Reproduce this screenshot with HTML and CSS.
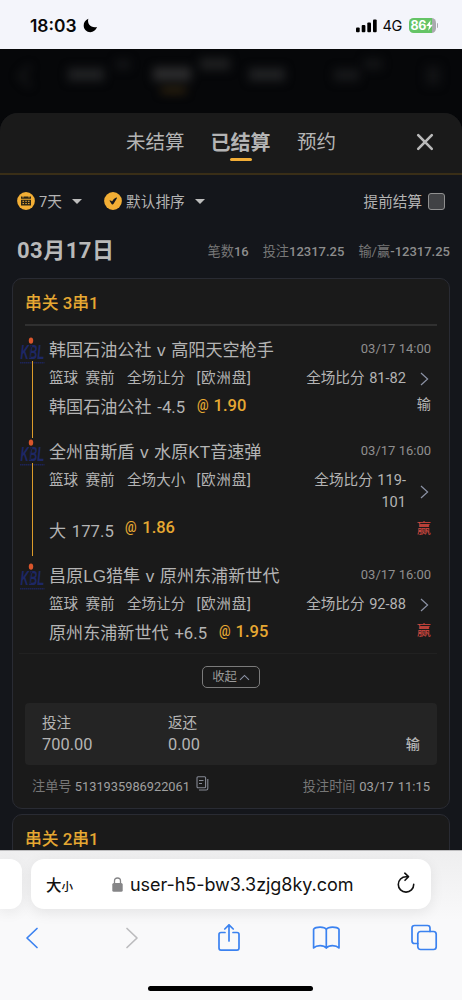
FILE: index.html
```html
<!DOCTYPE html>
<html lang="zh-CN">
<head>
<meta charset="utf-8">
<meta name="viewport" content="width=device-width, initial-scale=1">
<title>已结算</title>
<link rel="stylesheet" href="styles.css">
</head>
<body>
<header class="status">
  <span class="clock">18:03</span>
  <svg class="moon" width="15" height="15" viewBox="0 0 15 15"><path d="M5.3.8C3.9 5.9 8.2 10.6 14.1 9 12.7 12.4 10.2 14.2 7.4 14.2 3.6 14.2.7 11.3.7 7.5.7 4.5 2.3 2 5.3.8Z"/></svg>
  <svg class="signal" width="21" height="14" viewBox="0 0 21 14"><rect y="8.5" width="3.7" height="4.8" rx="1"/><rect x="5.7" y="6" width="3.7" height="7.3" rx="1"/><rect x="11.3" y="3.4" width="3.7" height="9.9" rx="1"/><rect x="17" y=".5" width="3.7" height="12.8" rx="1"/></svg>
  <span class="net">4G</span>
  <span class="battery"><b>86</b><svg width="7" height="11" viewBox="0 0 7 11"><path d="M4.6.2.2 6H3L2.2 10.8 6.8 4.8H4Z" fill="#fff"/></svg></span><i class="cap"></i>
</header>
<div class="backdrop">
  <svg width="462" height="64" viewBox="0 0 462 64" class="ghosts">
    <path d="M30 17 20 27 30 37" fill="none" stroke="#1d1e20" stroke-width="3"/>
    <g fill="#202123"><rect x="68" y="19" width="36" height="13"/><rect x="116" y="11" width="14" height="9" fill="#141517"/><rect x="249" y="19" width="36" height="13"/><rect x="334" y="20" width="25" height="12" fill="#17181a"/><rect x="364" y="10" width="18" height="10" fill="#141517"/><rect x="426" y="17" width="14" height="19" fill="#111214"/></g>
    <rect x="153" y="18" width="38" height="14" fill="#2b2b2c"/><rect x="200" y="9" width="30" height="12" fill="#1e1f20"/>
    <rect x="161" y="39" width="25" height="5" fill="#3b2b10"/>
  </svg>
</div>
<main class="sheet">
  <nav class="tabs">
    <span class="tab t1">未结算</span><span class="tab on">已结算</span><span class="tab t3">预约</span>
    <svg class="close" width="18" height="18" viewBox="0 0 18 18"><path d="M2.2 2.2 15.8 15.8M15.8 2.2 2.2 15.8" stroke="#b9b9b9" stroke-width="2.6" stroke-linecap="round"/></svg>
  </nav>
  <div class="filters">
    <svg width="18" height="18" viewBox="0 0 18 18"><circle cx="9" cy="9" r="8.9" fill="#f2ae35"/><path d="M4 4.6H14V6.8H4ZM4 7.7H14V13.4H4Z" fill="#292416"/><path d="M5.5 9.3H7M8.3 9.3H9.8M11 9.3H12.5M5.5 11.6H7M8.3 11.6H9.8M11 11.6H12.5M6 4V5.6M12 4V5.6" stroke="#f2ae35" stroke-width="1"/></svg>
    <span class="f1">7天</span><i class="caret"></i>
    <svg class="ic2" width="18" height="18" viewBox="0 0 18 18"><circle cx="9" cy="9" r="8.9" fill="#f2ae35"/><path d="M5.4 8.6Q7.2 8.2 8 9.4 9.6 6.2 12.2 5.4 13.4 5.2 12.8 6.6L9.6 11.8Q8.6 13 7.6 11.9Z" fill="#15171c"/></svg>
    <span class="f2">默认排序</span><i class="caret"></i>
    <span class="early">提前结算</span><i class="box"></i>
  </div>
  <div class="summary">
    <h1>03月17日</h1>
    <span>笔数<b>16</b></span><span>投注<b>12317.25</b></span><span>输/赢<b>-12317.25</b></span>
  </div>
  <section class="card">
    <h2>串关 <span>3</span>串<span>1</span></h2>
    <div class="legs">
      <article class="leg">
        <div class="rail">
          <svg class="kbl" width="25" height="28" viewBox="0 0 25 28"><text x="1" y="22.5" transform="scale(.55 1)">KBL</text><path d="M10 21C9.4 16 10 10 12.2 8.4" fill="none" stroke="#1a1b2c" stroke-width="1.2"/><ellipse cx="11" cy="3.6" rx="2.2" ry="3.2" fill="#d9552b"/><path d="M0 25.8H24.5" stroke="#1d2456" stroke-width="1.6" stroke-dasharray="1.6 .4"/></svg><i></i></div>
        <div class="info">
          <div class="match"><span>韩国石油公社 v 高阳天空枪手</span><time>03/17 14:00</time></div>
          <div class="market"><span class="m1">篮球</span><span class="m2">赛前</span><span class="m3">全场让分</span><span class="m4">[欧洲盘]</span><span class="score">全场比分 81-82</span><svg width="9" height="14" viewBox="0 0 9 14"><path d="M1 1 7.6 7 1 13"/></svg></div>
          <div class="pick"><span>韩国石油公社 <b>-4.5</b></span><em><i>@</i>1.90</em><strong>输</strong></div>
        </div>
      </article>
      <article class="leg">
        <div class="rail">
          <svg class="kbl" width="25" height="28" viewBox="0 0 25 28"><text x="1" y="22.5" transform="scale(.55 1)">KBL</text><path d="M10 21C9.4 16 10 10 12.2 8.4" fill="none" stroke="#1a1b2c" stroke-width="1.2"/><ellipse cx="11" cy="3.6" rx="2.2" ry="3.2" fill="#d9552b"/><path d="M0 25.8H24.5" stroke="#1d2456" stroke-width="1.6" stroke-dasharray="1.6 .4"/></svg><i></i></div>
        <div class="info">
          <div class="match"><span>全州宙斯盾 v 水原KT音速弹</span><time>03/17 16:00</time></div>
          <div class="market"><span class="m1">篮球</span><span class="m2">赛前</span><span class="m3">全场大小</span><span class="m4">[欧洲盘]</span><span class="score">全场比分 119-<br>101</span><svg width="9" height="14" viewBox="0 0 9 14"><path d="M1 1 7.6 7 1 13"/></svg></div>
          <div class="pick"><span>大 <b>177.5</b></span><em><i>@</i>1.86</em><strong class="win">赢</strong></div>
        </div>
      </article>
      <article class="leg">
        <div class="rail">
          <svg class="kbl" width="25" height="28" viewBox="0 0 25 28"><text x="1" y="22.5" transform="scale(.55 1)">KBL</text><path d="M10 21C9.4 16 10 10 12.2 8.4" fill="none" stroke="#1a1b2c" stroke-width="1.2"/><ellipse cx="11" cy="3.6" rx="2.2" ry="3.2" fill="#d9552b"/><path d="M0 25.8H24.5" stroke="#1d2456" stroke-width="1.6" stroke-dasharray="1.6 .4"/></svg></div>
        <div class="info">
          <div class="match"><span>昌原LG猎隼 v 原州东浦新世代</span><time>03/17 16:00</time></div>
          <div class="market"><span class="m1">篮球</span><span class="m2">赛前</span><span class="m3">全场让分</span><span class="m4">[欧洲盘]</span><span class="score">全场比分 92-88</span><svg width="9" height="14" viewBox="0 0 9 14"><path d="M1 1 7.6 7 1 13"/></svg></div>
          <div class="pick"><span>原州东浦新世代 <b>+6.5</b></span><em><i>@</i>1.95</em><strong class="win">赢</strong></div>
        </div>
      </article>
    </div>
    <div class="fold"><span>收起<svg width="11" height="7" viewBox="0 0 11 7"><path d="M1 5.8 5.5 1.4 10 5.8" fill="none" stroke="#8b92a5" stroke-width="1.1"/></svg></span></div>
    <div class="totals">
      <div class="stake">投注<b>700.00</b></div><div>返还<b>0.00</b></div><strong>输</strong>
    </div>
    <div class="meta">
      <span>注单号 <b class="id">5131935986922061</b></span>
      <svg width="13" height="15" viewBox="0 0 13 15" fill="none" stroke="#858994" stroke-width="1.1"><rect x="1" y=".8" width="8.6" height="11" rx="1"/><path d="M3 4.5H7.5M3 7.5H6M11.8 3V12.5Q11.8 14 10.3 14H3"/></svg>
      <span class="when">投注时间 <b>03/17 11:15</b></span>
    </div>
  </section>
  <section class="card next"><h2>串关 <span>2</span>串<span>1</span></h2></section>
</main>
<footer class="browser">
  <div class="bars">
    <div class="prev"></div>
    <div class="address">
      <span class="aa">大<small>小</small></span>
      <svg class="lock" width="11" height="15" viewBox="0 0 11 15"><rect x=".3" y="6" width="10.4" height="8.8" rx="1.6" fill="#858587"/><path d="M2.5 6.5V3.9Q2.5 1 5.5 1 8.5 1 8.5 3.9V6.5" fill="none" stroke="#858587" stroke-width="1.3"/></svg>
      <span class="url">user-h5-bw3.3zjg8ky.com</span>
      <svg class="reload" width="20" height="22" viewBox="0 0 20 22" fill="none" stroke="#111" stroke-width="1.6" stroke-linecap="round" stroke-linejoin="round"><path d="M12.3 4.7H10A7.7 7.7 0 1 0 17.7 12.4M8.8 1.2 12.5 4.7 9 8.3"/></svg>
    </div>
  </div>
  <div class="tools">
    <svg width="28" height="28" viewBox="0 0 28 28"><path d="M19 4.5 9 14 19 23.5"/></svg>
    <svg class="off" width="28" height="28" viewBox="0 0 28 28"><path d="M11 4.5 21 14 11 23.5"/></svg>
    <svg width="28" height="28" viewBox="0 0 28 28"><path d="M11 8.5H7Q5 8.5 5 10.5V24Q5 26.2 7 26.2H23Q25 26.2 25 24V10.5Q25 8.5 23 8.5H19M15 17V.8M10.8 5 15 .8 19.2 5"/></svg>
    <svg width="28" height="28" viewBox="0 0 28 28"><path d="M14.3 5.5Q12.8 3.2 8.1 3.2 3.3 3.2 1.6 5.3V24Q3.8 21.7 8.1 21.7 12.3 21.7 14.3 24 16.3 21.7 20.5 21.7 24.8 21.7 27 24V5.3Q25.3 3.2 20.5 3.2 15.8 3.2 14.3 5.5V24"/></svg>
    <svg width="28" height="28" viewBox="0 0 28 28"><path d="M7.8 19.5H4.5Q2 19.5 2 17V4Q2 1.5 4.5 1.5H17.5Q20 1.5 20 4V7.5"/><rect x="7.8" y="7.5" width="18.4" height="18" rx="2.7"/></svg>
  </div>
  <div class="home"></div>
</footer>
</body>
</html>
```
FILE: styles.css
```css
* { box-sizing: border-box; }
body {
  margin: 0;
  width: 462px;
  height: 1000px;
  overflow: hidden;
  display: flex;
  flex-direction: column;
  background: #060709;
  color: #b4b4b4;
  font-family: Roboto, "Noto Sans CJK SC", sans-serif;
}
svg { display: block; flex: none; }
i, em { font-style: normal; }
span, b, time { white-space: nowrap; }

.status {
  flex: none;
  height: 49px;
  padding: 2px 24px 0 30px;
  display: flex;
  align-items: center;
  background: #f4f5fb;
  color: #080808;
  font-family: Inter, sans-serif;
}
.clock { font-size: 17.4px; font-weight: 600; width: 48px; }
.moon { margin-left: 5px; }
.signal { margin-left: auto; }
.net { font-size: 14.5px; margin-left: 6px; width: 21px; letter-spacing: -.3px; }
.battery {
  margin-left: 5px;
  width: 27px;
  height: 15px;
  border-radius: 4.5px;
  background: linear-gradient(90deg, #65c466 23px, #a9aaae 23px);
  color: #fff;
  display: flex;
  align-items: center;
  padding-left: 2px;
}
.battery b { font-size: 12.5px; letter-spacing: -.3px; }
.cap { width: 1.5px; height: 5px; margin-left: 1px; border-radius: 0 2px 2px 0; background: #a9aaae; }

.backdrop { flex: none; height: 64px; background: #060709; overflow: hidden; }
.ghosts { filter: blur(5px); }

.sheet {
  flex: none;
  height: 737px;
  overflow: hidden;
  background: #14161b;
  border-radius: 18px 18px 0 0;
}
.tabs {
  height: 62px;
  padding: 0 28px 0 126px;
  background: #1a1a1a;
  border-bottom: 2px solid #392e17;
  display: flex;
  align-items: center;
}
.tab { font-size: 19.5px; line-height: 60px; height: 60px; }
.t1 { width: 84.5px; }
.on {
  width: 86.5px;
  font-size: 20px;
  font-weight: bold;
  display: flex;
  flex-direction: column;
}
.on::after { content: ""; width: 22px; height: 3px; margin: -15px 0 0 19.5px; border-radius: 2px; background: #f2ad36; }
.close { margin-left: auto; margin-bottom: 2px; }

.filters { height: 52px; padding: 0 17px; display: flex; align-items: center; font-size: 14.7px; }
.f1 { margin: 0 0 2px 4px; width: 33px; }
.caret { border: 5px solid transparent; border-top-color: #bdbdbd; border-bottom: 0; }
.ic2 { margin-left: 22px; }
.f2 { margin: 0 0 2px 4px; width: 69px; }
.early { margin: 0 0 2px auto; font-size: 14.6px; }
.box { width: 17px; height: 17px; margin-left: 6px; border: 1px solid #909090; border-radius: 3px; background: #414245; }

.summary { height: 51px; padding: 0 12px 4px 17px; display: flex; align-items: center; gap: 14px; font-size: 13.2px; color: #777; }
.summary h1 { margin: 0 auto 0 0; font-size: 22px; line-height: 30px; letter-spacing: .5px; color: #b9b9b9; }
.summary b { font-size: 13px; font-weight: 500; color: #8d8d8d; }

.card {
  margin: 0 12px;
  height: 531px;
  border: 1px solid #292b33;
  border-radius: 10px;
  background: #1a1a1a;
  padding: 0 12px;
}
.card h2 {
  margin: 0;
  height: 47px;
  font-size: 16.8px;
  line-height: 49px;
  font-weight: 500;
  color: #e6a832;
  border-bottom: 2px solid #303030;
}
.next { margin-top: 5px; }

.legs { margin-left: -6px; height: 328px; padding: 10px 0 0 1px; border-bottom: 1px solid #212121; }
.leg { display: flex; height: 102px; }
.leg:nth-child(2) { height: 124px; }
.rail { width: 25px; flex: none; padding-top: 1px; display: flex; flex-direction: column; align-items: center; }
.rail i { width: 1.5px; flex: 1; margin-top: -4px; background: #dc9c2b; }
.leg:nth-child(2) i { margin-bottom: 6px; }
.kbl text { font: italic bold 21px "Liberation Sans", sans-serif; fill: #1d2765; }
.info { flex: 1; margin-left: 4px; padding-right: 6px; }
.match { height: 30px; padding-bottom: 6px; display: flex; align-items: center; font: 17.1px "Liberation Sans", "Noto Sans CJK SC", sans-serif; word-spacing: .8px; }
time { margin-left: auto; font: 13px Roboto, sans-serif; color: #8f8f8f; word-spacing: 0; }
.market { display: flex; align-items: flex-start; font-size: 14.6px; line-height: 22px; padding-top: 1px; margin-bottom: 5px; }
.m1 { width: 36.5px; }
.m2 { width: 41.5px; }
.m3 { width: 69.5px; }
.m4 { letter-spacing: .7px; }
.score { margin-left: auto; text-align: right; word-spacing: 1px; }
.market svg { align-self: center; margin: 1px 2px 0 14px; fill: none; stroke: #8b92a5; stroke-width: 1.2; }
.pick { height: 28px; padding-bottom: 6px; display: flex; align-items: center; font-size: 17.1px; }
.pick span { word-spacing: 1.5px; }
.pick b { font-size: 16.7px; font-weight: 400; }
.pick em { margin: 1px 0 0 11.5px; font-size: 16.5px; font-weight: 500; color: #e6a832; display: flex; align-items: baseline; }
.pick em i { width: 17px; font-size: 15px; line-height: 15px; transform: translateY(-1px) scaleX(.86); transform-origin: left; }
.pick strong { margin: 0 0 5px auto; font-size: 14.2px; font-weight: 400; }
.pick .win { color: #d34940; }

.fold { height: 49px; display: flex; justify-content: center; align-items: flex-start; padding-top: 12px; }
.fold span {
  width: 58px;
  height: 22px;
  border: 1px solid #7b7b7b;
  border-radius: 5px;
  font-size: 12.3px;
  line-height: 18px;
  color: #999;
  display: flex;
  align-items: center;
  justify-content: center;
  gap: 2px;
}

.totals { height: 62px; padding: 9px 17px; border-radius: 4px; background: #242424; display: flex; font-size: 14.6px; line-height: 22px; }
.totals .stake { width: 126px; }
.totals b { display: block; font-size: 16.4px; font-weight: 400; line-height: 22px; }
.totals strong { margin-left: auto; margin-top: 21px; font-size: 14.2px; font-weight: 500; }

.meta { height: 42px; padding: 0 7px 2px; display: flex; align-items: center; font-size: 13.2px; color: #777; }
.meta b { font-weight: 400; font-size: 13px; color: #a0a0a0; }
.meta .id { font-size: 12.8px; }
.meta svg { margin: 0 0 3px 6px; }
.when { margin-left: auto; word-spacing: .5px; }

.browser { flex: none; height: 150px; overflow: hidden; background: linear-gradient(#eeeeef, #f9f9fa 70px); border-top: 1px solid #bdbdbf; }
.bars { display: flex; padding-top: 8px; gap: 9px; }
.prev { width: 22px; height: 50px; background: #fff; border-radius: 0 12px 12px 0; box-shadow: 0 4px 14px rgba(0, 0, 0, .06); }
.address {
  width: 400px;
  height: 50px;
  padding: 0 15px;
  display: flex;
  align-items: center;
  border-radius: 13px;
  background: #fff;
  box-shadow: 0 4px 14px rgba(0, 0, 0, .08);
  color: #111;
}
.aa { width: 66px; font: 500 15.5px "Noto Sans CJK SC", sans-serif; }
.aa small { font-size: 11.5px; }
.url { margin-left: 7px; font: 18px Inter, sans-serif; letter-spacing: -.05px; }
.reload { margin-left: auto; margin-bottom: 2px; }
.tools { display: flex; justify-content: space-between; padding: 15px 24px 0 18px; height: 77px; }
.tools svg { fill: none; stroke: #3b82f0; stroke-width: 1.7; stroke-linecap: round; stroke-linejoin: round; }
.tools .off { stroke: #bcbcbe; }
.home { width: 165px; height: 5px; margin-left: 148px; border-radius: 3px; background: #000; }
```
